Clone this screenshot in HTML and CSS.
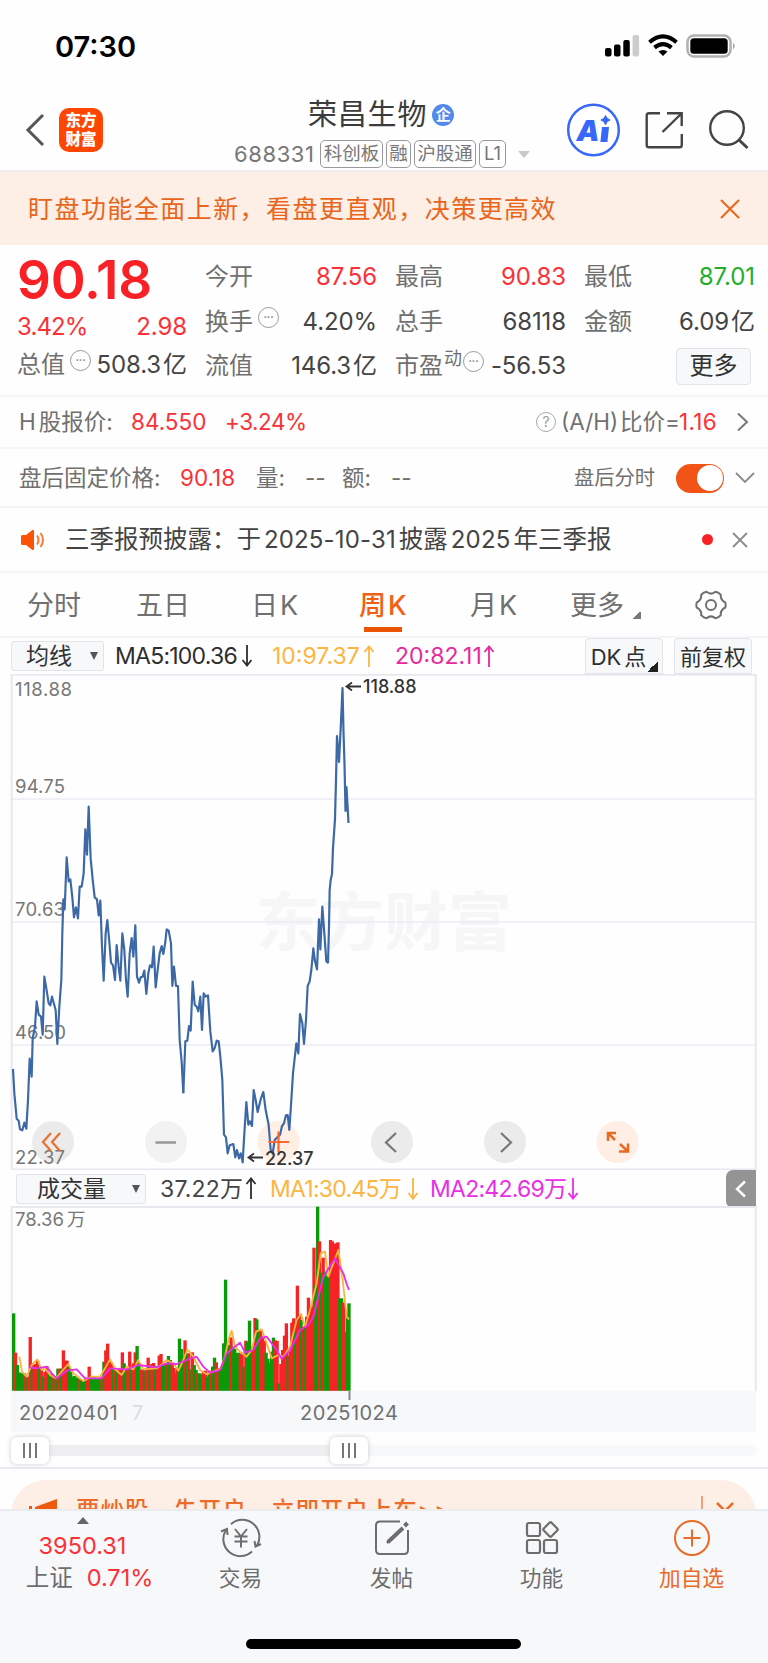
FILE: index.html
```html
<!DOCTYPE html>
<html lang="zh-CN">
<head>
<meta charset="utf-8">
<title>荣昌生物 688331</title>
<link rel="stylesheet" href="styles.css">
</head>
<body>
<div class="app">
  <div class="status">
    <span class="clock">07:30</span>
    <svg class="status-icons" width="134" height="26" viewBox="0 0 134 26">
      <rect x="1" y="14" width="6.5" height="8.5" rx="2"/><rect x="10" y="10.500" width="6.500" height="12" rx="2"/><rect x="19.300" y="6" width="6.500" height="16.500" rx="2"/><rect x="28.600" y="1" width="6.500" height="21.500" rx="2" fill="#ccc"/>
      <g fill="none" stroke="#000" stroke-width="4"><path d="M45.500 8.200Q59 -3.500 72.500 8.200"/><path d="M50.500 13.600Q59 6.600 67.500 13.600"/></g><path d="M54.500 17.500Q59 14.500 63.500 17.500L59 22z"/>
      <rect x="83.500" y="1.500" width="43" height="21" rx="6.500" fill="#fff" stroke="#b0b0b0" stroke-width="2.500"/><rect x="86.300" y="4.200" width="37.400" height="15.600" rx="3.500"/><path d="M129 8.500q3.600 3.500 0 7z" fill="#aaa"/>
    </svg>
  </div>

  <header class="header">
    <svg class="back" width="22" height="36" viewBox="0 0 22 36"><path d="M18 3L3 18L18 33" fill="none" stroke="#555" stroke-width="3"/></svg>
    <div class="logo">东方<br>财富</div>
    <div class="title">
      <div class="title-name"><span>荣昌生物</span><span class="corp">企</span></div>
      <div class="title-tags"><span class="code">688331</span><span class="tag t3">科创板</span><span class="tag t1">融</span><span class="tag t3b">沪股通</span><span class="tag tl">L1</span><i class="caret"></i></div>
    </div>
    <svg class="head-icons" width="190" height="60" viewBox="565 100 190 60">
      <circle cx="594.500" cy="130" r="25.300" fill="#fff" stroke="#3768fb" stroke-width="2.500"/>
      <text x="577.500" y="140.500" class="ai">A</text><path d="M603 127h7l-1.600 15h-7z" fill="#3768fb"/><path d="M606.500 115.500l1.600 2.900 3 1.600-3 1.600-1.600 3.200-1.600-3.200-3-1.600 3-1.600z" fill="#3768fb" stroke="#3768fb"/>
      <g fill="none" stroke="#444" stroke-width="2.400"><path d="M661 113.200H650q-2.300 0-2.300 2.300V145q0 2.300 2.300 2.300h30.500q2.300 0 2.300-2.300V134M663.500 132L682.500 113.500M668 113.200h14.700V126"/><circle cx="728" cy="128" r="16.800"/><path d="M739.500 139.500l9 8.500" stroke-width="3"/></g>
    </svg>
  </header>

  <div class="banner"><span>盯盘功能全面上新，看盘更直观，决策更高效</span>
    <svg width="20" height="20" viewBox="0 0 20 20"><path d="M1 1L19 19M19 1L1 19" stroke="#e8661b" stroke-width="2" fill="none"/></svg>
  </div>

  <section class="quote">
    <div class="q-main">
      <div class="price">90.18</div>
      <div class="pair red"><span>3.42%</span><span>2.98</span></div>
      <div class="pair"><span class="lab">总值<i class="more">•••</i></span><span>508.3<b>亿</b></span></div>
    </div>
    <div class="q-col">
      <div class="pair"><span class="lab">今开</span><span class="red">87.56</span></div>
      <div class="pair"><span class="lab">换手<i class="more">•••</i></span><span>4.20%</span></div>
      <div class="pair"><span class="lab">流值</span><span>146.3<b>亿</b></span></div>
    </div>
    <div class="q-col">
      <div class="pair"><span class="lab">最高</span><span class="red">90.83</span></div>
      <div class="pair"><span class="lab">总手</span><span>68118</span></div>
      <div class="pair"><span class="lab">市盈<em>动</em><i class="more tight">•••</i></span><span>-56.53</span></div>
    </div>
    <div class="q-col">
      <div class="pair"><span class="lab">最低</span><span class="green">87.01</span></div>
      <div class="pair"><span class="lab">金额</span><span>6.09<b>亿</b></span></div>
      <div class="pair end"><span class="btn-more">更多</span></div>
    </div>
  </section>

  <div class="row h-row">
    <span>H<b>股报价:</b></span><span class="red">84.550</span><span class="red pct">+3.24%</span>
    <span class="q">?</span><span>(A/H)</span><span class="nb">比价=</span><span class="red ratio">1.16</span>
    <svg width="14" height="20" viewBox="0 0 14 20"><path d="M2 1.500L11 10L2 18.500" fill="none" stroke="#777" stroke-width="2"/></svg>
  </div>
  <div class="row p-row">
    <span>盘后固定价格:</span><span class="red">90.18</span><span>量:</span><span>--</span><span>额:</span><span>--</span>
    <span class="small">盘后分时</span><span class="toggle"><i></i></span>
    <svg width="20" height="14" viewBox="0 0 20 14"><path d="M1 2L10 11L19 2" fill="none" stroke="#8a8a90" stroke-width="1.800"/></svg>
  </div>
  <div class="row n-row">
    <svg width="26" height="22" viewBox="0 0 26 22"><path d="M1 7.500q0-1.500 1.500-1.500H6L12 1.200q2-1.200 2 1v17.600q0 2-2 .9L6 16H2.500Q1 16 1 14.500z" fill="#fc5206"/><path d="M17 6.500q3 4.500 0 9M20.500 4q5 7 0 14" fill="none" stroke="#fc7a40" stroke-width="2"/></svg>
    <span class="notice">三季报预披露：于<b>2025-10-31</b>披露<b>2025</b>年三季报</span>
    <i class="dot"></i>
    <svg width="16" height="16" viewBox="0 0 16 16"><path d="M1 1L15 15M15 1L1 15" stroke="#8c8c8c" stroke-width="1.800"/></svg>
  </div>

  <nav class="tabs">
    <span>分时</span><span>五日</span><span>日<b>K</b></span><span class="on">周<b>K</b></span><span>月<b>K</b></span><span class="tri">更多</span>
    <svg width="32" height="32" viewBox="-16 -16 32 32"><path d="M-4.500-13.200Q0-9.500 4.500-13.200Q8-12.500 9.800-10.200Q9.200-5 14.300-2.500Q15 0 14.300 2.500Q9.200 5 9.800 10.200Q8 12.500 4.500 13.200Q0 9.500-4.500 13.200Q-8 12.500-9.800 10.200Q-9.200 5-14.300 2.500Q-15 0-14.300-2.500Q-9.200-5-9.800-10.200Q-8-12.500-4.500-13.200z" fill="none" stroke="#707070" stroke-width="2"/><circle r="5" fill="none" stroke="#707070" stroke-width="2"/></svg>
  </nav>

  <div class="tools">
    <span class="select s-ma">均线<i></i></span>
    <span class="ma tight5">MA5:100.36</span><svg class="arr" viewBox="0 0 12 24"><path d="M6 1V21M1.500 16L6 21.500L10.500 16"/></svg>
    <span class="ma yellow">10:97.37</span><svg class="arr yellow" viewBox="0 0 12 24"><path d="M6 23V3M1.500 8L6 2.500L10.500 8"/></svg>
    <span class="ma pink">20:82.11</span><svg class="arr pink" viewBox="0 0 12 24"><path d="M6 23V3M1.500 8L6 2.500L10.500 8"/></svg>
    <span class="tab-btn dk">DK<b>点</b></span><span class="tab-btn">前复权</span>
  </div>

  <svg class="chart" width="768" height="496" viewBox="0 674 768 496">
    <text x="256" y="945" class="wm" textLength="256">东方财富</text>
    <g fill="none" stroke="#ececf3" stroke-width="1.500"><path d="M11 799H756M11 922H756M11 1045H756"/><path d="M11.700 674.700H755.700V1169.500H11.700z" stroke="#e7e8ef" stroke-width="2"/></g>
    <g class="axis"><text x="15" y="695.500" textLength="57">118.88</text><text x="15" y="793" textLength="50">94.75</text><text x="15" y="916" textLength="50">70.63</text><text x="15" y="1039" textLength="51">46.50</text><text x="15" y="1163.500" textLength="50">22.37</text></g>
    <g fill="#777" fill-opacity=".14"><circle cx="53" cy="1142" r="21"/><circle cx="166" cy="1142" r="21" fill-opacity=".09"/><circle cx="392" cy="1142" r="21"/><circle cx="505" cy="1142" r="21"/></g>
    <g fill="#feeee4"><circle cx="278.500" cy="1142" r="21"/><circle cx="617.500" cy="1142" r="21"/></g>
    <g fill="none" stroke="#3c68a6" stroke-width="6.500" stroke-linejoin="round">
      <polyline transform="translate(0 780) scale(.33333)" points="39,867 43,940 50,1016 56,1022 60,1048 67,1051 73,1028 79,1046 84,960 89,836 95,890 98,775 105,740 110,664 116,704 123,710 128,764 133,590 139,625 146,670 151,676 156,650 167,690 172,792 178,680 184,600 187,460 190,358 194,388 200,232 206,304 211,298 217,352 222,412 228,382 234,415 239,320 245,320 251,280 256,148 261,224 266,80 272,236 278,298 284,352 291,358 296,406 301,362 306,500 311,602 317,460 322,420 328,486 333,548 339,556 345,600 350,495 356,560 361,602 367,460 373,510 378,600 383,650 389,520 395,474 400,530 406,436 411,590 417,608 422,592 428,590 433,572 439,642 445,580 450,556 456,562 461,500 467,622 473,570 479,520 485,498 490,522 496,486 500,448 506,452 513,490 517,618 522,560 528,618 534,618 539,780 545,846 550,940"/>
      <polyline transform="translate(180 880) scale(.33333)" points="10,638 16,484 22,482 27,438 32,452 38,305 44,374 50,380 55,394 61,350 66,450 71,340 77,350 84,346 91,455 98,514 104,504 110,482 116,484 121,530 127,600 132,764 138,772 143,820 149,796 160,792 166,832 171,810 177,835 182,820 188,847 193,760 199,666 205,734 210,724 216,738 221,630 227,660 233,696 243,655 250,636 257,690 266,735 272,810 278,820 284,780 292,772 300,764 306,738 312,730 318,706 323,705 328,750 334,660 339,580 349,490 355,520 360,402 367,430 372,492 378,420 383,318 389,304 394,270 400,205 405,244 411,268 417,118 421,208 427,80 433,160 439,244 444,248 447,140 449,30 452,0 456,-18"/>
      <polyline transform="translate(0 674)" stroke-width="2.200" points="332,200 333,174 335,145 336,106 337,62 339,88 341,48 342.500,14 343.500,58 344.500,90 345.500,137 346.500,113 348.500,149"/>
    </g>
    <g fill="none" stroke-width="2.200">
      <path d="M51 1133L43 1142L51 1151M60 1133L52 1142L60 1151" stroke="#e87032"/><path d="M155.500 1142.500H176" stroke="#999" stroke-width="2.500"/>
      <path d="M268.500 1142H289M278.500 1131.500V1152" stroke="#fa692b"/><path d="M396 1133L386 1142.500L396 1152M501 1133L511 1142.500L501 1152" stroke="#777"/>
      <path d="M608 1141V1133H616M608 1133L615 1140M628 1143.500V1151.500H619M628 1151.500L620 1144" stroke="#e66a22" stroke-width="2.500"/>
    </g>
    <g fill="none" stroke="#333" stroke-width="1.800"><path d="M361 686.500H347M352 682.500L346.500 686.500L352 690.500M263 1157.500H249M254 1153.500L248.500 1157.500L254 1161.500"/></g>
    <g class="mark"><text x="363" y="693" textLength="53.500">118.88</text><text x="265" y="1165" textLength="48.500">22.37</text></g>
  </svg>

  <div class="tools vol-tools">
    <span class="select s-vol">成交量<i></i></span>
    <span class="ma dark">37.22万</span><svg class="arr dark" viewBox="0 0 12 24"><path d="M6 22V2M1.500 7L6 1.500L10.500 7"/></svg>
    <span class="ma yellow tight5">MA1:30.45万</span><svg class="arr yellow" viewBox="0 0 12 24"><path d="M6 1V21M1.500 16L6 21.500L10.500 16"/></svg>
    <span class="ma magenta tight5">MA2:42.69万</span><svg class="arr magenta" viewBox="0 0 12 24"><path d="M6 1V21M1.500 16L6 21.500L10.500 16"/></svg>
    <span class="drawer"><svg width="12" height="18" viewBox="0 0 12 18"><path d="M10 1.500L2 9L10 16.500" fill="none" stroke="#fff" stroke-width="2.400"/></svg></span>
  </div>

  <svg class="volume" width="768" height="194" viewBox="0 1206 768 194">
    <rect x="11" y="1391" width="745" height="9" fill="#f7f8fa"/>
    <path d="M11.700 1391V1207H755.700V1391" fill="none" stroke="#e7e8ef" stroke-width="2"/>
    <text x="15" y="1225.500" class="vl">78.36</text><text x="67" y="1225.500" class="vl">万</text>
    <path d="M349.500 1391V1400" stroke="#888" stroke-width="2"/>
    <g transform="translate(0 1160) scale(.33333)"><g id="bars"></g>
      <g fill="none" stroke-width="5.500" stroke-linejoin="round">
        <polyline stroke="#fcb43c" points="58,590 66,635 80,650 95,615 112,598 125,630 135,625 150,645 168,655 185,635 205,612 220,640 250,663 275,650 300,650 315,625 330,598 348,630 365,645 380,620 400,628 415,600 430,628 470,625 480,618 500,600 520,610 535,632 550,600 562,568 580,590 600,630 620,643 650,630 662,625 675,590 685,540 695,512 705,560 720,575 740,590 755,570 768,515 785,508 800,550 815,595 835,585 850,590 870,560 890,480 903,462 915,500 930,450 950,370 962,280 975,275 985,350 1000,310 1015,270 1028,360 1040,470 1047,478"/>
        <polyline stroke="#e82fe6" points="88,622 110,625 140,620 155,640 170,655 200,632 230,628 255,655 305,655 330,625 380,628 415,615 470,622 500,610 530,612 560,600 590,590 610,620 630,638 660,630 680,580 720,548 735,578 760,570 780,535 800,530 830,570 845,597 870,570 900,510 925,495 940,470 970,350 1005,295 1030,340 1040,372 1047,390"/>
      </g>
    </g>
  </svg>

  <div class="dates"><span>20220401</span><span class="ghost">7</span><span class="last">20251024</span></div>
  <div class="slider"><div class="track"><i class="handle"></i><i class="handle"></i></div></div>
  <div class="promo-wrap"><div class="promo">
    <svg width="30" height="24" viewBox="0 0 30 24"><path d="M6 9L28 1V24H6z" fill="#ee5a0c"/><rect x="0" y="8" width="3" height="12" fill="#ee5a0c"/></svg>
    <span>要炒股，先开户，立即开户上车&gt;&gt;</span><i class="bar"></i>
    <svg width="18" height="18" viewBox="0 0 18 18"><path d="M1 1L17 17M17 1L1 17" stroke="#ee6a28" stroke-width="2.500"/></svg>
  </div></div>

  <footer class="nav">
    <div class="index"><i></i><span class="red">3950.31</span><div>上证<span class="red">0.71%</span></div></div>
    <div class="item"><svg width="42" height="40" viewBox="-21 -20 42 40"><g fill="none" stroke="#6d6d6d" stroke-width="2"><path d="M-10-13.800A17 17 0 0 1 16 7.500M11 13.500A17 17 0 0 1-15-8"/><path d="M-20-6.500L-14-9L-13.500-3M20 6L14.500 8.500L13.500 3M-6-9L0-1.500L6-9M0-1.500V9.500M-6.500-1.500H6.500M-6.500 3.500H6.500"/></g></svg><span>交易</span></div>
    <div class="item"><svg width="42" height="40" viewBox="-21 -20 42 40"><g fill="none" stroke="#6d6d6d" stroke-width="2"><path d="M8-16.500H-12Q-16-16.500-16-12.500V12Q-16 16 -12 16H12Q16 16 16 12V-8"/><path d="M-4 4L11-10M12.500-12L15.500-15" stroke-width="4"/><path d="M-5 5L0 0" stroke-width="2.500"/></g></svg><span>发帖</span></div>
    <div class="item"><svg width="42" height="40" viewBox="-21 -20 42 40"><g fill="none" stroke="#6d6d6d" stroke-width="2.200"><rect x="-15" y="-15" width="13" height="13" rx="2"/><rect x="-15" y="2" width="13" height="13" rx="2"/><rect x="2" y="2" width="13" height="13" rx="2"/><rect x="3" y="-14" width="11" height="11" rx="1.500" transform="rotate(45 8.500 -8.500)"/></g></svg><span>功能</span></div>
    <div class="item add"><svg width="42" height="40" viewBox="-21 -20 42 40"><g fill="none" stroke="#ea6a26" stroke-width="2"><circle r="17"/><path d="M-8.500 0H8.500M0-8.500V8.500"/></g></svg><span>加自选</span></div>
    <div class="home"></div>
  </footer>
</div>
<script src="volume.js"></script>
</body>
</html>
```
FILE: styles.css
```css
* { box-sizing: border-box; }
body { margin: 0; background: #fff; }
.app { width: 768px; height: 1663px; overflow: hidden; background: #fefefe; color: #444; font-family: "Inter", "Noto Sans CJK SC", sans-serif; font-size: 24px; line-height: 30px; white-space: nowrap; }
i, em { font-style: normal; }
b { font-weight: 400; }
svg { display: block; flex: none; }
.red { color: #fa3237; }
.green { color: #1faf2b; }

.status { height: 92px; display: flex; justify-content: space-between; align-items: flex-start; padding: 32px 30px 0 55px; }
.clock { font-size: 29px; font-weight: 600; color: #000; letter-spacing: 0; }
.status-icons { margin-top: 2px; }

.header { height: 80px; display: flex; border-bottom: 2px solid #efeff1; }
.back { margin: 20px 0 0 25px; }
.logo { margin: 16px 0 0 12px; width: 44px; height: 44px; border-radius: 10px; background: #fd4602; color: #fff; font: 900 15.500px/19px "Noto Sans CJK SC", sans-serif; text-align: center; padding-top: 2px; }
.title { width: 330px; margin-left: 131px; }
.title-name { display: flex; height: 46px; align-items: center; padding-left: 74px; font-size: 29px; letter-spacing: .8px; color: #3c3c3c; }
.corp { width: 22px; height: 22px; margin-left: 5px; border-radius: 50%; background: #5389ea; color: #fff; font-size: 15px; line-height: 21px; font-weight: 700; text-align: center; letter-spacing: 0; }
.title-tags { display: flex; height: 32px; align-items: center; color: #777; }
.code { width: 86px; font-size: 22px; letter-spacing: .6px; }
.tag { height: 28px; border: 1.500px solid #999; border-radius: 5px; font-size: 18.500px; line-height: 25px; text-align: center; margin-right: 3px; }
.t3 { width: 63px; } .t1 { width: 25px; } .t3b { width: 62px; } .tl { width: 27px; }
.caret { margin-left: 9px; border: 6.500px solid transparent; border-top: 7px solid #c8c8c8; border-bottom: 0; }
.head-icons { margin: 8px 0 0 0; }
.ai { font: 900 29px "Inter"; fill: #3768fb; font-style: italic; }

.banner { height: 73px; background: #fdeee6; display: flex; align-items: center; justify-content: space-between; padding: 0 28px 0 28px; font-size: 25px; letter-spacing: 1.450px; color: #e8661b; }

.quote { height: 152px; display: grid; grid-template-columns: 170px 172px 171px 171px; column-gap: 18px; padding: 10px 0 0 17px; border-bottom: 2px solid #f5f5f7; }
.q-main, .q-col { display: flex; flex-direction: column; }
.q-col .pair { height: 44.500px; }
.price { height: 53px; font-size: 53px; line-height: 50px; font-weight: 600; letter-spacing: -.2px; color: #f92126; }
.pair { display: flex; justify-content: space-between; align-items: center; height: 38px; font-size: 24px; letter-spacing: -.1px; }
.q-main .red span:first-child { letter-spacing: -.9px; }
.pair b { margin-left: 2px; }
.lab { color: #707070; display: flex; align-items: center; letter-spacing: 0; }
.lab em { font-size: 18px; margin: -15px 0 0 1px; }
.more { width: 21px; height: 21px; margin: -9px 0 0 5px; border: 1.500px solid #999; border-radius: 50%; font-size: 6px; line-height: 18px; text-align: center; color: #888; }
.more.tight { margin-left: 1px; }
.end { justify-content: flex-end; }
.btn-more { width: 75px; height: 37px; margin-right: 4px; border: 1.500px solid #e3e4ea; border-radius: 4px; background: #f7f8fa; text-align: center; line-height: 33px; color: #333; }

.row { display: grid; align-items: center; border-bottom: 2px solid #f5f5f7; font-size: 22.500px; color: #707070; }
.h-row { height: 52px; grid-template-columns: 112px 94px 311px 25px 58px 59px 58px 20px; padding-left: 19px; }
.h-row b { margin-left: 3px; }
.pct { letter-spacing: -.5px; }
.nb { padding-left: 1px; }
.ratio { padding-left: 1px; letter-spacing: .3px; }
.h-row .q { width: 20px; height: 20px; border: 1.500px solid #aaa; border-radius: 50%; font-size: 14px; line-height: 17px; text-align: center; color: #999; }
.p-row { height: 59px; grid-template-columns: 161px 76px 49px 37px 49px 183px 102px 59px 20px; padding-left: 19px; padding-top: 1px; }
.p-row .small { font-size: 20.300px; }
.toggle { width: 48px; height: 29px; border-radius: 15px; background: #f25316; padding: 1.500px; display: flex; justify-content: flex-end; }
.toggle i { width: 26px; height: 26px; border-radius: 50%; background: #fff; }
.n-row { height: 65px; grid-template-columns: 45px 637px 30px 20px; padding-left: 20px; color: #444; }
.notice { font-size: 24.500px; }
.notice b { letter-spacing: .15px; margin: 0 3px; font-size: 24px; }
.dot { width: 11px; height: 11px; border-radius: 50%; background: #f92126; }

.tabs { height: 65px; display: grid; grid-template-columns: 109px 115px 108px 111px 100px 125px 40px; padding-left: 27px; align-items: center; font-size: 27px; color: #707070; border-bottom: 2px solid #f5f5f7; }
.tabs b { margin-left: 2px; }
.tabs span { height: 63px; line-height: 65px; justify-self: start; }
.on { color: #f26013; font-weight: 500; background: linear-gradient(#ec5405, #ec5405) 50% 54px / 38px 5px no-repeat; }
.on b { font-weight: 500; }
.tri { display: flex; }
.tri::after { content: ""; margin: 38px 0 0 9px; width: 8px; height: 8px; background: linear-gradient(135deg, transparent 50%, #777 50%); }

.tools { height: 36px; display: grid; grid-template-columns: 104px 126px 31px 91px 32px 88px 102px 89px 80px; padding-left: 11px; align-items: center; font-size: 23px; color: #2e2e2e; }
.select { display: flex; align-items: center; justify-content: space-between; height: 30px; border: 1.500px solid #e3e4ea; border-radius: 3px; background: #f7f8fa; color: #333; }
.s-ma { width: 93px; padding: 0 5px 0 14px; }
.select i { border: 4.500px solid transparent; border-top: 8px solid #555; border-bottom: 0; }
.ma { letter-spacing: 0; }
.tight5 { letter-spacing: -.75px; }
.arr { width: 12px; height: 24px; fill: none; stroke: #2e2e2e; stroke-width: 1.800; }
.yellow { color: #fdb541; stroke: #fdb541; }
.pink { color: #e7299b; stroke: #e7299b; }
.magenta { color: #e82fe6; stroke: #e82fe6; }
span.yellow, span.pink, span.magenta { stroke: none; }
.tab-btn { width: 78px; height: 36px; border: 1.500px solid #e3e4ea; border-radius: 4px 4px 0 0; background: #f7f8fa; text-align: center; font-size: 22px; line-height: 36px; }
.dk { padding-right: 11px; background: linear-gradient(135deg, transparent 50%, #222 50%) 61px 22px / 11px 11px no-repeat, #f7f8fa; }
.dk b { margin-left: 3px; }

.wm { font: 700 64px "Noto Sans CJK SC"; fill: #f6f6f6; }
.axis text, .vl { font-family: "Inter", "Noto Sans CJK SC"; font-size: 18.500px; fill: #777; }
.mark text { font: 500 18px "Inter"; fill: #333; }

.vol-tools { grid-template-columns: 144px 85px 25px 137px 23px 137px 159px 30px; padding-left: 16px; }
.s-vol { width: 130px; padding: 0 5px 0 20px; }
.dark { color: #444; letter-spacing: .2px; }
.drawer { width: 30px; height: 38px; background: #949494; border-radius: 7px 0 0 7px; display: flex; align-items: center; justify-content: center; }

.dates { margin: 0 12px 0 11px; height: 32px; background: #f7f8fa; display: flex; align-items: center; padding: 0 0 6px 8px; font-size: 20px; letter-spacing: .45px; color: #707070; }
.dates span { width: 113px; }
.dates .ghost { width: 168px; color: #ddd; }
.slider { height: 37px; padding: 13px 12px 0 11px; border-bottom: 2px solid #e9e9ef; }
.track { height: 11px; display: flex; align-items: center; justify-content: space-between; padding-right: 388px; border-radius: 5px; background: linear-gradient(90deg, #efeff2 45%, #f7f8fa 45%); }
.handle { width: 38px; height: 27px; border-radius: 6px; box-shadow: 0 0 5px #ccc; background: linear-gradient(90deg, #777 2px, transparent 2px 6px, #777 6px 8px, transparent 8px 12px, #777 12px) 50% 50% / 14px 15px no-repeat, #fff; }
.promo-wrap { height: 40px; padding: 11px 12px 0 11px; overflow: hidden; }
.promo { height: 70px; border-radius: 35px; background: #fdeee6; display: grid; grid-template-columns: 47px 625px 15px 20px; padding: 16px 0 0 18px; align-items: start; font-size: 23.500px; font-weight: 500; letter-spacing: .9px; color: #ee6a28; }
.promo svg { margin-top: 2px; }
.promo .bar { width: 2px; height: 28px; background: #efa27a; }
.promo svg:last-child { margin-top: 6px; }

.nav { height: 154px; background: #f7f8fa; border-top: 2px solid #ebecef; display: grid; grid-template-columns: 165px 151px 151px 149px 151px; grid-template-rows: 128px 12px; color: #6d6d6d; }
.index { display: flex; flex-direction: column; align-items: center; font-size: 23.500px; letter-spacing: 0; padding: 6px 0 0 0; }
.index i { border: 6px solid transparent; border-bottom: 7px solid #666; border-top: 0; }
.index > span { margin-top: 6px; line-height: 31px; }
.index div { padding-left: 14px; line-height: 33px; }
.index div span { margin-left: 14px; }
.item { display: flex; flex-direction: column; align-items: center; padding-top: 7px; font-size: 21.700px; }
.item span { margin-top: 4px; line-height: 32px; }
.add { color: #ea6a26; }
.home { grid-column: 1 / -1; justify-self: center; width: 275px; height: 10px; border-radius: 5px; background: #000; }
```
FILE: volume.js
```javascript
// Weekly bars: colour code followed by the top edge of the bar.
var bars = ("g460 r578 g615 g637 g640 g640 r640 g650 r650 r531 g620 r615 r612 r602 g620 r628 g650 r635 r618 g640 g645 r642 g650 r655 g626 r626 g626 r571 r602 r602 g620 g635 g650 g648 g652 g655 r658 g660 g665 g656 r656 r620 g650 g653 g652 g654 g655 g653 r650 g605 r571 r551 r606 r612 g628 r632 g634 r630 r628 r577 g610 g628 r628 r575 g625 r610 r577 g558 g610 r630 r628 g632 r625 r593 g620 r612 r609 g618 r628 r587 r582 g616 g612 r612 g588 g600 r608 r624 r638 r622 g536 g567 g590 r541 g580 r580 g628 r577 g615 g630 r640 g640 g643 r635 r632 g650 g637 r632 g620 g593 r607 r625 g630 g625 g550 g359 g556 g556 r532 g560 g567 g580 g578 r582 r578 g620 r542 g545 g482 g560 r560 r474 g478 g511 r511 r530 r543 g578 g596 g608 g575 g533 r541 r543 g670 r612 r570 r527 r490 g588 r575 r488 r475 g500 r377 r465 g480 r500 g503 r470 r413 r440 r440 r263 g374 g140 r244 g338 r293 g335 g348 g348 r240 r244 r252 r250 r247 g415 g415 r428 r516 g460 g430").split(" ");
var host = document.getElementById("bars");
var base = 692;
var step = (1042 - 36) / (bars.length - 1);
bars.forEach(function (bar, i) {
  var top = Number(bar.slice(1));
  var rect = document.createElementNS("http://www.w3.org/2000/svg", "rect");
  rect.setAttribute("x", (36 + i * step).toFixed(1));
  rect.setAttribute("y", top);
  rect.setAttribute("width", 10);
  rect.setAttribute("height", base - top);
  rect.setAttribute("fill", bar[0] === "g" ? "#0b9a07" : "#f62325");
  host.appendChild(rect);
});
```
